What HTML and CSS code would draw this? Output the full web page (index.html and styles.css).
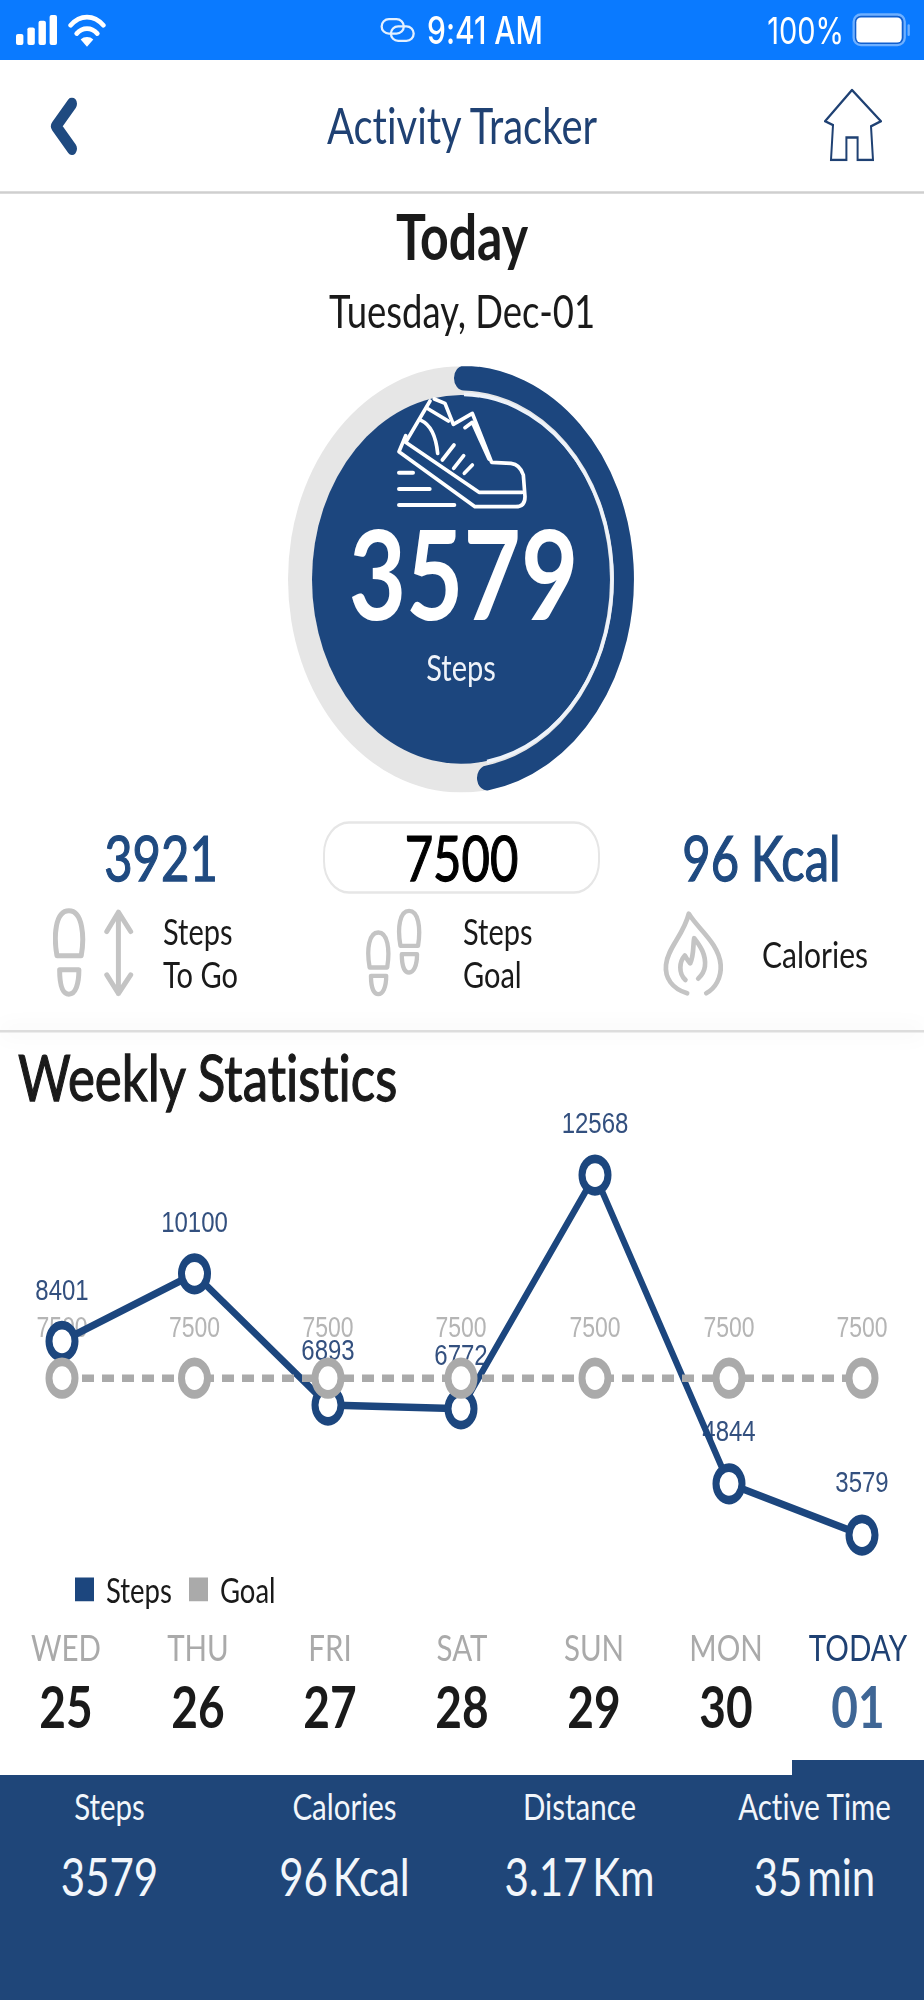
FILE: index.html
```html
<!DOCTYPE html>
<html lang="en">
<head>
    <meta charset="UTF-8">
    <meta name="viewport" content="width=device-width, initial-scale=1.0">
    <title>Activity Tracker</title>
    <link rel="stylesheet" href="styles.css">
</head>
<body>
    <div class="screen">
        <div class="status-bar">
            <div class="status-left">
                <svg class="signal" viewBox="48 40 122 92" preserveAspectRatio="none">
                    <rect x="48" y="98" width="22" height="34" rx="6"/>
                    <rect x="82" y="78" width="22" height="54" rx="6"/>
                    <rect x="115" y="58" width="22" height="74" rx="6"/>
                    <rect x="148" y="40" width="22" height="92" rx="6"/>
                </svg>
                <svg class="wifi" viewBox="200 40 114 102" preserveAspectRatio="none">
                    <path class="wifi-arc" d="M208 75 C236 42 278 42 306 75"/>
                    <path class="wifi-arc" d="M226 100 C244 80 270 80 288 100"/>
                    <path d="M257 140 L238 118 C248 108 266 108 276 118 Z"/>
                </svg>
            </div>
            <div class="status-center">
                <svg class="link" viewBox="28 55 106 76" preserveAspectRatio="none">
                    <rect x="33" y="60" width="67" height="44" rx="22"/>
                    <rect x="61" y="82" width="69" height="44" rx="22"/>
                </svg>
                <span>9:41 AM</span>
            </div>
            <div class="status-right">
                <span>100%</span>
                <svg class="battery" viewBox="35 35 178 105" preserveAspectRatio="none">
                    <rect class="battery-glow" x="40" y="41" width="154" height="92" rx="22"/>
                    <rect class="battery-fill" x="48" y="50" width="137" height="75" rx="14"/>
                    <path class="battery-nub" d="M206 74 V102"/>
                </svg>
            </div>
        </div>

        <header class="top-nav">
            <svg class="back" viewBox="0 0 28 46" preserveAspectRatio="none">
                <path d="M22 5 L6 23 L22 41"/>
            </svg>
            <h1>Activity Tracker</h1>
            <svg class="home" viewBox="0 0 58 58" preserveAspectRatio="none">
                <path d="M28 1 L57 26 L47 30 L49 57 H33.6 V39 H22.4 V57 H7 L9 29 L1 26 Z"/>
            </svg>
        </header>

        <section class="today">
            <h2>Today</h2>
            <p class="date">Tuesday, Dec-01</p>
            <div class="ring">
                <svg class="ring-chart" viewBox="0 0 346 341">
                    <ellipse class="ring-track" cx="173" cy="170.5" rx="173" ry="170.5"/>
                    <ellipse class="ring-core" cx="173" cy="170.5" rx="149" ry="147.5"/>
                    <path class="ring-progress" d="M176 9.5 A163 161 0 0 1 199 329.4"/>
                    <path class="ring-edge" d="M176 22.5 A151 148 0 0 1 199 316.3"/>
                </svg>
                <svg class="shoe" viewBox="0 0 450 405" preserveAspectRatio="none">
                    <path d="M62 152 L42 200 L270 365 H392 Q420 365 420 335 L415 270 Q405 238 378 235 L320 232 L262 85 L205 118 L180 55 L148 42"/>
                    <path d="M135 48 L62 172 L282 322 H412"/>
                    <path d="M130 72 L190 108 M108 106 Q150 125 158 205"/>
                    <path d="M240 128 L262 112 L312 222"/>
                    <path d="M207 180 L172 225 M236 212 L206 250 M262 240 L238 265"/>
                    <path class="shoe-speed" d="M42 263 H84 M42 312 H134 M42 360 H208"/>
                </svg>
                <div class="ring-count">3579</div>
                <div class="ring-label">Steps</div>
            </div>
        </section>

        <section class="summary">
            <div class="summary-values">
                <div class="summary-value">3921</div>
                <div class="summary-value goal-pill">7500</div>
                <div class="summary-value">96 Kcal</div>
            </div>
            <div class="summary-items">
                <div class="summary-item item-togo">
                    <svg class="icon-togo" viewBox="40 20 250 270" preserveAspectRatio="none">
                        <path d="M52 165 C42 110 45 30 88 30 C130 30 135 110 125 165 Z"/>
                        <path d="M60 207 H118 C118 250 108 280 88 280 C68 280 60 250 60 207 Z"/>
                        <path d="M237 34 V278 M202 92 L237 34 L274 92 M202 222 L237 278 L274 222"/>
                    </svg>
                    <span>Steps<br>To Go</span>
                </div>
                <div class="summary-item item-goal">
                    <svg class="icon-feet" viewBox="28 25 172 270" preserveAspectRatio="none">
                        <path d="M42 205 C32 150 40 100 68 100 C96 100 104 150 95 205 Z"/>
                        <path d="M46 230 H92 C92 265 82 285 68 285 C54 285 46 265 46 230 Z"/>
                        <path d="M135 140 C125 85 133 35 161 35 C189 35 197 85 188 140 Z"/>
                        <path d="M139 165 H185 C185 200 175 220 161 220 C147 220 139 200 139 165 Z"/>
                    </svg>
                    <span>Steps<br>Goal</span>
                </div>
                <div class="summary-item item-calories">
                    <svg class="icon-flame" viewBox="20 25 185 260" preserveAspectRatio="none">
                        <path d="M95 276 C50 262 28 230 32 190 C36 140 85 100 100 36 C125 80 190 125 195 190 C198 230 178 262 152 276"/>
                        <path d="M90 236 C68 215 72 180 88 162 C94 172 98 180 104 186 C116 160 112 130 116 110 C135 135 152 160 148 195 C146 212 138 222 128 232"/>
                    </svg>
                    <span>Calories</span>
                </div>
            </div>
        </section>

        <div class="divider"></div>

        <section class="weekly">
            <h2>Weekly Statistics</h2>
            <svg class="chart" viewBox="0 0 924 360">
                <g class="goal-labels">
                    <text x="62" y="180">7500</text>
                    <text x="194.5" y="180">7500</text>
                    <text x="328" y="180">7500</text>
                    <text x="461" y="180">7500</text>
                    <text x="595" y="180">7500</text>
                    <text x="729" y="180">7500</text>
                    <text x="862" y="180">7500</text>
                </g>
                <g class="step-labels">
                    <text x="62" y="150">8401</text>
                    <text x="194.5" y="96">10100</text>
                    <text x="328" y="198">6893</text>
                    <text x="461" y="202">6772</text>
                    <text x="595" y="16">12568</text>
                    <text x="729" y="263">4844</text>
                    <text x="862" y="304">3579</text>
                </g>
                <polyline class="step-line" points="62,183 194.5,129 328,234 461,237 595,50 729,297 862,338"/>
                <g class="step-dots">
                    <circle cx="62" cy="183" r="13"/>
                    <circle cx="194.5" cy="129" r="13"/>
                    <circle cx="328" cy="234" r="13"/>
                    <circle cx="461" cy="237" r="13"/>
                    <circle cx="595" cy="50" r="13"/>
                    <circle cx="729" cy="297" r="13"/>
                    <circle cx="862" cy="338" r="13"/>
                </g>
                <line class="goal-line" x1="62" y1="212.5" x2="862" y2="212.5"/>
                <g class="goal-dots">
                    <circle cx="62" cy="212.5" r="13"/>
                    <circle cx="194.5" cy="212.5" r="13"/>
                    <circle cx="328" cy="212.5" r="13"/>
                    <circle cx="461" cy="212.5" r="13"/>
                    <circle cx="595" cy="212.5" r="13"/>
                    <circle cx="729" cy="212.5" r="13"/>
                    <circle cx="862" cy="212.5" r="13"/>
                </g>
            </svg>
            <div class="legend">
                <i class="swatch swatch-steps"></i><span class="legend-steps">Steps</span>
                <i class="swatch swatch-goal"></i><span>Goal</span>
            </div>
            <div class="days">
                <div class="day"><span>WED</span><b>25</b></div>
                <div class="day"><span>THU</span><b>26</b></div>
                <div class="day"><span>FRI</span><b>27</b></div>
                <div class="day"><span>SAT</span><b>28</b></div>
                <div class="day"><span>SUN</span><b>29</b></div>
                <div class="day"><span>MON</span><b>30</b></div>
                <div class="day day-today"><span>TODAY</span><b>01</b></div>
            </div>
        </section>

        <footer class="totals">
            <div class="total"><span>Steps</span><b>3579</b></div>
            <div class="total"><span>Calories</span><b>96 Kcal</b></div>
            <div class="total"><span>Distance</span><b>3.17 Km</b></div>
            <div class="total"><span>Active Time</span><b>35 min</b></div>
        </footer>
    </div>
</body>
</html>
```

FILE: styles.css
```css
html, body {
    margin: 0;
    padding: 0;
    background: #fff;
}

body {
    font-family: 'Lato', 'Open Sans', sans-serif;
    font-variant-ligatures: none;
    color: #1a1a1a;
    height: 2000px;
    overflow: hidden;
}

/* the whole app is drawn tall: 1600 layout px shown over 2000 */
.screen {
    width: 924px;
    height: 1600px;
    transform: scaleY(1.25);
    transform-origin: top left;
}

h1, h2, p {
    margin: 0;
    font-weight: 400;
}

/* status bar */
.status-bar {
    height: 48px;
    background: #0a7aff;
    color: #fff;
    display: flex;
    align-items: center;
    justify-content: space-between;
    padding: 0 16px;
    box-sizing: border-box;
    font-family: 'Inter', sans-serif;
    font-size: 29px;
    position: relative;
}

.status-left,
.status-center,
.status-right {
    display: flex;
    align-items: center;
}

.status-center {
    position: absolute;
    left: 380px;
    gap: 12px;
    font-size: 30px;
    font-weight: 500;
}

.signal {
    width: 41px;
    height: 24px;
    fill: #fff;
}

.wifi {
    width: 38px;
    height: 27px;
    margin-left: 11px;
    fill: #fff;
}

.wifi-arc {
    fill: none;
    stroke: #fff;
    stroke-width: 14;
    stroke-linecap: round;
}

.link {
    width: 35px;
    height: 20px;
    fill: none;
    stroke: #e3f0ff;
    stroke-width: 7;
}

.status-right {
    gap: 8px;
    margin-right: -3px;
}

.battery {
    width: 59px;
    height: 28px;
}

.battery-glow {
    fill: #0f5fd0;
    stroke: #6fb0ff;
    stroke-width: 7;
}

.battery-fill {
    fill: #fff;
}

.battery-nub {
    fill: none;
    stroke: #6fb0ff;
    stroke-width: 7;
    stroke-linecap: round;
}

/* title bar */
.top-nav {
    height: 107px;
    border-bottom: 2px solid #cfcfcf;
    box-sizing: border-box;
    display: flex;
    align-items: center;
    justify-content: space-between;
    padding: 0 42px 0 50px;
    position: relative;
}

.top-nav h1 {
    position: absolute;
    left: 0;
    right: 0;
    top: 28px;
    text-align: center;
    font-size: 40px;
    color: #1f4173;
}

.back {
    width: 28px;
    height: 46px;
    fill: none;
    stroke: #1f4a80;
    stroke-width: 10;
    stroke-linecap: round;
    stroke-linejoin: round;
}

.home {
    width: 58px;
    height: 58px;
    fill: none;
    stroke: #1f4173;
    stroke-width: 2;
    margin-bottom: 2px;
}

/* today ring */
.today {
    padding-top: 9px;
    text-align: center;
}

.today h2 {
    font-size: 50px;
    font-weight: 700;
    line-height: 50px;
}

.date {
    font-size: 36.5px;
    line-height: 40px;
    margin-top: 14px;
}

.ring {
    position: relative;
    width: 346px;
    height: 341px;
    margin: 25px 0 0 288px;
}

.ring-chart {
    display: block;
    width: 346px;
    height: 341px;
}

.ring-track {
    fill: #e6e6e6;
}

.ring-core {
    fill: #1c467e;
}

.ring-edge {
    fill: none;
    stroke: #eef3fa;
    stroke-width: 3;
}

.ring-progress {
    fill: none;
    stroke: #1c467e;
    stroke-width: 20;
    stroke-linecap: round;
}

.shoe {
    position: absolute;
    left: 97px;
    top: 15px;
    width: 150px;
    height: 108px;
    fill: none;
    stroke: #fff;
    stroke-width: 11;
    stroke-linejoin: round;
    stroke-linecap: round;
}

.shoe-speed {
    stroke-width: 12;
}

.ring-count {
    position: absolute;
    left: 5px;
    right: 0;
    top: 115px;
    line-height: 100px;
    font-size: 99px;
    font-weight: 700;
    color: #fff;
    text-align: center;
}

.ring-label {
    position: absolute;
    left: 0;
    right: 0;
    top: 223px;
    line-height: 36px;
    font-size: 29px;
    color: #eef3fa;
    text-align: center;
}

/* numbers below the ring */
.summary {
    margin-top: 23px;
}

.summary-values {
    display: flex;
    height: 58px;
    align-items: center;
    font-size: 49px;
    color: #1f4a80;
    -webkit-text-stroke: 1px currentColor;
}

.summary-value {
    text-align: center;
    word-spacing: -1px;
}

.summary-value:nth-child(1) {
    width: 322px;
}

.goal-pill {
    width: 277px;
    height: 58px;
    line-height: 54px;
    margin-left: 1px;
    box-sizing: border-box;
    border: 2px solid #e6e6e6;
    border-radius: 26px;
    color: #000;
}

.summary-value:nth-child(3) {
    width: 323px;
}

.summary-items {
    display: flex;
    margin-top: 11px;
    height: 72px;
}

.summary-item {
    display: flex;
    align-items: center;
    font-size: 29px;
    line-height: 34px;
}

.item-togo {
    width: 310px;
    padding-left: 53px;
    box-sizing: border-box;
}

.item-goal {
    width: 355px;
    padding-left: 55px;
    box-sizing: border-box;
}

.item-calories {
    flex: 1;
    font-size: 30px;
}

.summary-item svg {
    fill: none;
    stroke: #c4c4c4;
    stroke-linejoin: round;
    stroke-linecap: round;
}

.icon-togo {
    width: 83px;
    height: 72px;
    stroke-width: 15;
    margin-right: 27px;
}

.icon-feet {
    width: 57px;
    height: 72px;
    stroke-width: 13;
    margin-right: 41px;
}

.icon-flame {
    width: 62px;
    height: 69px;
    stroke-width: 14;
    margin: 0 38px 0 -3px;
}

.divider {
    height: 2px;
    margin-top: 26px;
    background: #dcdcdc;
    box-shadow: 0 0 20px rgba(0, 0, 0, 0.16);
}

/* weekly chart */
.weekly {
    padding-top: 11px;
}

.weekly h2 {
    font-size: 51px;
    line-height: 50px;
    padding-left: 18px;
    margin-bottom: 3px;
    -webkit-text-stroke: 1px currentColor;
}

.chart {
    display: block;
    width: 924px;
    height: 360px;
    overflow: visible;
}

.chart text {
    font-family: 'Liberation Sans', sans-serif;
    text-anchor: middle;
}

.goal-labels {
    fill: #b5b5b5;
    font-size: 23px;
}

.step-labels {
    fill: #33507f;
    font-size: 24px;
}

.step-line {
    fill: none;
    stroke: #1c467e;
    stroke-width: 6;
}

.step-dots circle {
    fill: #fff;
    stroke: #1c467e;
    stroke-width: 7;
}

.goal-line {
    stroke: #aaa;
    stroke-width: 6;
    stroke-dasharray: 12 8;
}

.goal-dots circle {
    fill: #fff;
    stroke: #aaa;
    stroke-width: 7;
}

.legend {
    display: flex;
    align-items: center;
    height: 24px;
    margin-top: 9px;
    padding-left: 75px;
    font-size: 27.5px;
}

.swatch {
    width: 19px;
    height: 19px;
    margin-right: 12px;
}

.swatch-steps {
    background: #1c467e;
}

.swatch-goal {
    background: #aaa;
}

.legend-steps {
    margin-right: 17px;
}

.days {
    display: flex;
    margin-top: 20px;
}

.day {
    width: 132px;
    text-align: center;
}

.day span {
    display: block;
    font-size: 29.5px;
    line-height: 30px;
    color: #aaa;
}

.day b {
    display: block;
    font-size: 46px;
    font-weight: 700;
    line-height: 50px;
    margin-top: 7px;
    color: #1a1a1a;
}

.day-today span {
    color: #1f4173;
}

.day-today b {
    color: #3f6695;
}

/* totals panel */
.totals {
    position: relative;
    height: 182px;
    margin-top: 30px;
    margin-left: -8px;
    padding-top: 8px;
    width: 940px;
    box-sizing: border-box;
    display: flex;
    background: #1f4679;
    color: #f2f6fb;
}

/* tab that marks the selected day */
.totals::before {
    content: '';
    position: absolute;
    right: 8px;
    top: -12px;
    width: 132px;
    height: 12px;
    background: #1f4679;
}

.total {
    width: 235px;
    text-align: center;
}

.total span {
    display: block;
    font-size: 29.5px;
    line-height: 34px;
}

.total b {
    display: block;
    font-size: 42px;
    font-weight: 400;
    line-height: 44px;
    margin-top: 17px;
    word-spacing: -6px;
}
```
